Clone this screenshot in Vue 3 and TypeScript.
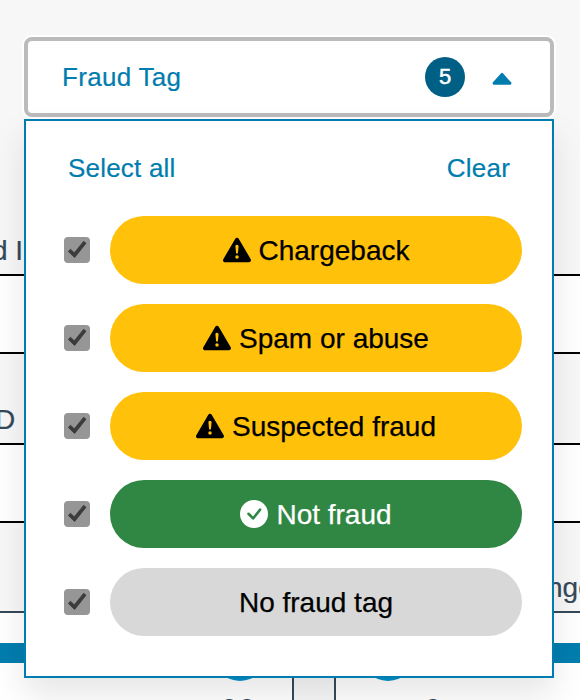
<script setup lang="ts">
import { computed, ref } from 'vue'

type Kind = 'warning' | 'success' | 'neutral'
interface Tag { label: string; kind: Kind; checked: boolean }

const tags = ref<Tag[]>([
  { label: 'Chargeback', kind: 'warning', checked: true },
  { label: 'Spam or abuse', kind: 'warning', checked: true },
  { label: 'Suspected fraud', kind: 'warning', checked: true },
  { label: 'Not fraud', kind: 'success', checked: true },
  { label: 'No fraud tag', kind: 'neutral', checked: true },
])
const open = ref(true)
const count = computed(() => tags.value.filter((t) => t.checked).length)

function setAll(value: boolean) {
  tags.value.forEach((t) => { t.checked = value })
}
</script>

<template>
  <main class="page">
    <div class="backdrop">
      <div class="label-row first"><span class="left-a">d I</span></div>
      <div class="field"></div>
      <div class="label-row second"><span class="left-b">D</span></div>
      <div class="field"></div>
      <div class="label-row third"><span class="right">nge</span></div>
      <div class="gap"></div>
      <div class="band"></div>
      <div class="cards">
        <div class="card card-left"><i class="dot"></i><span>00</span></div>
        <div class="card card-right"><i class="dot"></i><span>0</span></div>
      </div>
    </div>

    <div class="dropdown">
      <button class="trigger" type="button" @click="open = !open">
        <span class="title">Fraud Tag</span>
        <span class="count">{{ count }}</span>
        <svg class="caret" width="20" height="14" viewBox="0 0 20 14">
          <path d="M10 2.400L17.900 11.300H2.100Z" />
        </svg>
      </button>
      <div v-if="open" class="menu">
        <div class="actions">
          <button type="button" class="link" @click="setAll(true)">Select all</button>
          <button type="button" class="link clear" @click="setAll(false)">Clear</button>
        </div>
        <div class="options">
          <label v-for="tag in tags" :key="tag.label" class="option">
            <input v-model="tag.checked" type="checkbox" class="native" />
            <span class="box">
              <svg v-if="tag.checked" width="26" height="26" viewBox="0 0 26 26">
                <path d="M4.300 14.400L6.600 12.300L10.300 15.800L19.700 4.300L22 6.300L10.600 20.600Z" />
              </svg>
            </span>
            <span class="pill" :class="tag.kind">
              <svg v-if="tag.kind === 'warning'" class="icon" viewBox="0 0 16 16">
                <path d="M8.982 1.566a1.130 1.130 0 0 0-1.960 0L.165 13.233c-.457.778.091 1.767.98 1.767h13.713c.889 0 1.438-.99.980-1.767zM8 5c.535 0 .954.462.900.995l-.350 3.507a.552.552 0 0 1-1.100 0L7.100 5.995A.905.905 0 0 1 8 5m.002 6a1 1 0 1 1 0 2 1 1 0 0 1 0-2" />
              </svg>
              <svg v-if="tag.kind === 'success'" class="icon" viewBox="0 0 16 16">
                <path d="M16 8A8 8 0 1 1 0 8a8 8 0 0 1 16 0m-3.970-3.030a.750.750 0 0 0-1.080.022L7.477 9.417 5.384 7.323a.750.750 0 0 0-1.060 1.060L6.970 11.030a.750.750 0 0 0 1.079-.020l3.992-4.990a.750.750 0 0 0-.010-1.050z" />
              </svg>
              <span class="text">{{ tag.label }}</span>
            </span>
          </label>
        </div>
      </div>
    </div>
  </main>
</template>

<style>
body { margin: 0; overflow: hidden; }
</style>

<style scoped>
.page {
  position: relative;
  width: 580px;
  height: 700px;
  overflow: hidden;
  background: #fff;
  font-family: "Liberation Sans", Arial, sans-serif;
}
.page * { box-sizing: border-box; }
button { appearance: none; margin: 0; font: inherit; cursor: pointer; }

.backdrop { display: flex; flex-direction: column; height: 700px; color: #34495a; font-size: 28px; line-height: 32px; -webkit-text-stroke: .2px currentColor; }
.label-row { display: flex; align-items: flex-end; flex: none; background: #f7f7f7; border-bottom: 2px solid #000; white-space: pre; }
.first { height: 276px; padding-bottom: 7px; }
.second { height: 91px; padding-bottom: 7px; }
.third { height: 90px; padding-bottom: 7px; border-color: #34495a; }
.left-a { margin-left: -8px; }
.left-b { margin-left: -5px; }
.right { margin-left: 547px; }
.field { flex: none; height: 78px; border-bottom: 2px solid #000; }
.gap { flex: none; height: 30px; }
.band { flex: none; height: 20px; background: #007dae; }
.cards { display: flex; justify-content: space-between; height: 37px; overflow: hidden; background: #f7f7f7; }
.card { display: flex; flex-direction: column; align-items: center; background: #fff; font-size: 32px; line-height: 36px; }
.card-left { width: 294px; padding-left: 188px; border-right: 2px solid #34495a; }
.card-right { width: 246px; padding-right: 140px; border-left: 2px solid #34495a; }
.dot { flex: none; width: 56px; height: 56px; margin-top: -38px; border-radius: 50%; background: #0090ca; }
.card span { margin-top: 11px; }
.card-left span { margin-right: 4px; }
.card-right span { margin-left: 90px; }

.dropdown { position: absolute; top: 37px; left: 24px; width: 530px; }
.trigger {
  display: flex;
  align-items: center;
  width: 530px;
  height: 80px;
  padding: 0 38px 0 34px;
  border: 4px solid #bbb;
  border-radius: 8px;
  background: #fff;
  box-shadow: 0 0 0 2px #fff;
  color: #007dae;
  font-size: 26px;
  letter-spacing: .3px;
}
.title { margin-right: auto; -webkit-text-stroke: .2px currentColor; }
.count {
  display: flex;
  align-items: center;
  justify-content: center;
  width: 40px;
  height: 40px;
  margin-right: 27px;
  border-radius: 50%;
  background: #005f85;
  color: #fff;
  font-size: 22px;
  letter-spacing: 0;
  -webkit-text-stroke: .5px #fff;
}
.caret { margin-top: 3px; }
.caret path { fill: #007dae; stroke: #007dae; stroke-width: 3; stroke-linejoin: round; }
.menu {
  position: relative;
  width: 530px;
  height: 559px;
  margin-top: 2px;
  border: 2px solid #007dae;
  background: #fff;
  box-shadow: 0 16px 32px rgba(0, 0, 0, .1);
}
.actions { display: flex; justify-content: space-between; padding: 32px 42px 0; }
.link { padding: 0; border: 0; background: none; color: #007dae; font-size: 26px; line-height: 30px; letter-spacing: .2px; -webkit-text-stroke: .2px currentColor; }
.options { display: flex; flex-direction: column; gap: 20px; padding: 33px 30px 0 38px; }
.option { display: flex; align-items: center; height: 68px; }
.native { position: absolute; opacity: 0; pointer-events: none; }
.box { display: flex; flex: none; width: 26px; height: 26px; margin-right: 20px; border-radius: 4px; background: #969696; }
.box path { fill: #3b3b3b; stroke: #3b3b3b; stroke-width: .8; stroke-linejoin: round; }
.pill {
  display: flex;
  align-items: center;
  justify-content: center;
  gap: 8px;
  flex: 1;
  height: 68px;
  border-radius: 34px;
  font-size: 28px;
  line-height: 32px;
  color: #000;
}
.text { padding-top: 2px; -webkit-text-stroke: .25px currentColor; }
.icon { width: 28px; height: 28px; fill: currentColor; }
.warning { background: #ffc10a; }
.success { background: #308643; color: #fff; }
.neutral { background: #d8d8d8; }
</style>
